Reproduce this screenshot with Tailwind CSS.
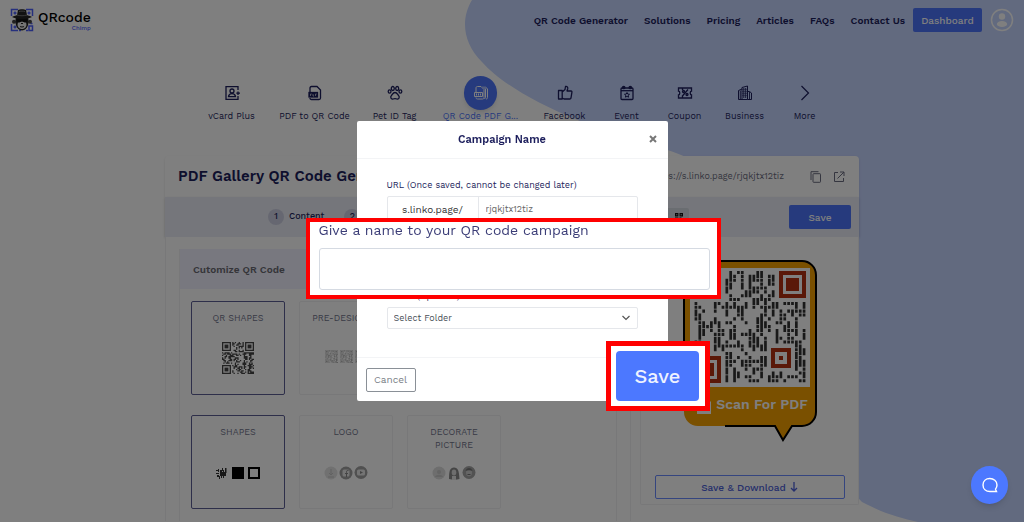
<!DOCTYPE html>
<html lang="en">
<head>
    <meta charset="UTF-8">
    <meta name="viewport" content="width=device-width, initial-scale=1.0">
    <title>PDF Gallery QR Code Generator</title>
    <script src="https://cdn.jsdelivr.net/npm/@tailwindcss/browser@4"></script>
</head>
<body class="h-screen overflow-hidden bg-white font-['Work_Sans',Inter,sans-serif] text-[#1c1e5c]">
    <div class="relative min-h-full">
        <!-- Background shape -->
        <svg class="absolute top-0 right-0 w-[560px] h-[522px]" viewBox="464 0 560 522" fill="#c5d4ff">
            <path d="M472 0C461 18 462 42 482 62C498 80 530 101 580 121C620 137 650 142 686 157C760 195 800 270 820 370C830 440 840 480 862 502C885 514 900 518 918 522H1024V0Z"/>
        </svg>

        <!-- Header -->
        <header class="relative flex items-center justify-between h-10 px-[10px]">
            <a href="#" class="flex items-center gap-1 text-black" aria-label="QRcode Chimp">
                <svg class="w-6 h-6" viewBox="0 0 24 24">
                    <g fill="none" stroke="#4c60fa" stroke-width="1.5">
                        <path d="M8 1.500H1.500V8M3.500 5h3M5 3.500v3M16 1.500h6.500V8M17.500 5h3M19 3.500v3M1.500 16v6.500H8M3.500 19h3M5 17.500v3M16 22.500h2M19 18h3.500v4.500H19zM22.500 15.500h-2M9 22.500h2"/>
                    </g>
                    <circle cx="4" cy="13.800" r="2" fill="#444"/>
                    <circle cx="20" cy="13.800" r="2" fill="#444"/>
                    <path d="M6 9h12c1.500 6 0 13-6 13.500C6 22 4.500 15 6 9z" fill="#222"/>
                    <path d="M8 14.500c2-1 6-1 8 0 1.500 4-1 6.500-4 6.500s-5.500-2.500-4-6.500z" fill="#e8e8e8"/>
                    <path d="M6.500 10.500h11v2c-1 2.500-4 2.500-5 .3h-1c-1 2.200-4 2.200-5-.3z" fill="#111"/>
                    <path d="M2 9c2-1.500 4-1 5-2l1-5c2-1 6-1 8 0l1 5c1 1 3 .5 5 2-4 2.500-16 2.500-20 0z" fill="#222"/>
                    <path d="M7 7c3 1 7 1 10 0M9 3.500c2-.5 4-.5 6 0" stroke="#888" stroke-width=".8" fill="none"/>
                    <path d="M10 18.500c1 .6 3 .6 4 0M11 15.500h2" stroke="#222" fill="none"/>
                </svg>
                <span class="flex flex-col items-end">
                    <span class="text-[14px] leading-[15px] font-medium">QRcode</span>
                    <span class="text-[6px] leading-[6px] font-medium text-[#4c60fa]">Chimp</span>
                </span>
            </a>
            <nav class="flex items-center gap-4 text-[10px] font-semibold">
                <a href="#">QR Code Generator</a>
                <a href="#">Solutions</a>
                <a href="#">Pricing</a>
                <a href="#">Articles</a>
                <a href="#">FAQs</a>
                <a href="#">Contact Us</a>
                <button class="-ml-2 w-[69px] h-6 rounded-xs bg-[#4c74fa] text-white font-medium">Dashboard</button>
                <a href="#" class="-ml-2" aria-label="Account">
                    <svg class="w-6 h-6" viewBox="0 0 24 24" fill="#fff">
                        <circle cx="12" cy="12" r="10.500" fill="none" stroke="#fff" stroke-width="1.500"/>
                        <circle cx="12" cy="8.500" r="3.200"/>
                        <ellipse cx="12" cy="16" rx="5.200" ry="3"/>
                    </svg>
                </a>
            </nav>
        </header>

        <!-- QR types -->
        <ul class="relative flex justify-center pt-9 pl-[3px] text-[9px] leading-3 text-center whitespace-nowrap">
            <li class="w-[72px]"><a href="#" class="flex flex-col items-center">
                <span class="flex items-center justify-center w-8 h-[34px]">
                    <svg class="w-4 h-4" viewBox="0 0 16 16" fill="none" stroke="currentColor" stroke-width="1.300"><path d="M14 5V1.700H2v12.600h12V11M14 6.500v3.500M12.300 8.200H16"/><circle cx="8" cy="6" r="2"/><path d="M4.500 11.700c.5-4 6.500-4 7 0z"/></svg>
                </span>vCard Plus</a></li>
            <li class="w-[94px]"><a href="#" class="flex flex-col items-center">
                <span class="flex items-center justify-center w-8 h-[34px]">
                    <svg class="w-4 h-4" viewBox="0 0 16 16" fill="none" stroke="currentColor" stroke-width="1.300"><path d="M3 7V3c0-1 .5-1.500 1.500-1.500H10l3.500 3.500v8c0 1-.5 1.500-1.500 1.500H4.500c-1 0-1.500-.5-1.500-1.500"/><rect x="2" y="7.500" width="8.500" height="4.500" fill="currentColor"/><path d="M3.500 11V9h1.200M6 9v2h1M8.500 11V9h1.200" stroke="#fff" stroke-width=".6"/></svg>
                </span>PDF to QR Code</a></li>
            <li class="w-[66px]"><a href="#" class="flex flex-col items-center">
                <span class="flex items-center justify-center w-8 h-[34px]">
                    <svg class="w-4 h-4" viewBox="0 0 16 16" fill="none" stroke="currentColor" stroke-width="1.300"><ellipse cx="5.800" cy="3.500" rx="1.500" ry="2"/><ellipse cx="10.200" cy="3.500" rx="1.500" ry="2"/><ellipse cx="2.600" cy="6.500" rx="1.400" ry="1.700"/><ellipse cx="13.400" cy="6.500" rx="1.400" ry="1.700"/><path d="M8 7.500c-2 0-2.500 2-3.500 3-1.500 1.500-.5 4 1.500 3.500 1.300-.4 2.700-.4 4 0 2 .5 3-2 1.500-3.500-1-1-1.500-3-3.500-3z"/></svg>
                </span>Pet ID Tag</a></li>
            <li class="w-[106px] text-[#4c74fa]"><a href="#" class="flex flex-col items-center">
                <span class="flex items-center justify-center w-[33px] h-[34px] rounded-full bg-[#4c74fa] text-white shadow-md">
                    <svg class="w-4 h-4" viewBox="0 0 16 16" fill="none" stroke="currentColor"><path d="M3 7V3c0-1 .5-1.500 1.500-1.500H8l3 3v8c0 1-.5 1.500-1.500 1.500h-5c-1 0-1.500-.5-1.500-1.500"/><path d="M10 1.500l2.500 2.500v8.500l-1 1.500M12 1.500L14.500 4v8.500c0 1-.5 1.500-1.500 1.500"/><path d="M1.500 7.500h8v4h-8zM3.500 10.500v-2M5.500 8.500v2M7.500 10.500v-2"/></svg>
                </span>QR Code PDF G...</a></li>
            <li class="w-[62px]"><a href="#" class="flex flex-col items-center">
                <span class="flex items-center justify-center w-8 h-[34px]">
                    <svg class="w-4 h-4" viewBox="0 0 16 16" fill="none" stroke="currentColor" stroke-width="1.300" stroke-linejoin="round"><path d="M1.500 5.500h3.700v8.500H1.500zM5.200 7L8 4.500 8.500 1.500c2-.3 2.500 1 2.200 2.200L10 6h4c.8 0 1 .7.900 1.300L14 13c-.2.700-.5 1-1.200 1H7l-1.800-1"/></svg>
                </span>Facebook</a></li>
            <li class="w-[62px]"><a href="#" class="flex flex-col items-center">
                <span class="flex items-center justify-center w-8 h-[34px]">
                    <svg class="w-4 h-4" viewBox="0 0 16 16" fill="none" stroke="currentColor" stroke-width="1.300"><rect x="2" y="3" width="12" height="11.500" rx="1"/><path d="M2 5.700h12"/><circle cx="4.700" cy="2.500" r="1.200" fill="currentColor"/><circle cx="11.300" cy="2.500" r="1.200" fill="currentColor"/><path d="M8 7.500l.8 1.600 1.700.2-1.300 1.200.4 1.700L8 11.400l-1.600.8.400-1.700-1.300-1.200 1.700-.2z" stroke-width="1"/></svg>
                </span>Event</a></li>
            <li class="w-[54px]"><a href="#" class="flex flex-col items-center">
                <span class="flex items-center justify-center w-8 h-[34px]">
                    <svg class="w-4 h-4" viewBox="0 0 16 16" fill="none" stroke="currentColor" stroke-width="1.300"><path d="M1.500 3h13v3c-1.700 0-1.700 4 0 4v3h-13v-3c1.700 0 1.700-4 0-4z"/><path d="M5 11.500l6-7M5.500 3v2M5.500 11v2"/><circle cx="6.500" cy="6.500" r="1"/><circle cx="10" cy="9.500" r="1"/></svg>
                </span>Coupon</a></li>
            <li class="w-[66px]"><a href="#" class="flex flex-col items-center">
                <span class="flex items-center justify-center w-8 h-[34px]">
                    <svg class="w-4 h-4" viewBox="0 0 16 16" fill="none" stroke="currentColor"><path d="M5 14.500H1.500V5.500L5 4M5 14.500v-12L10.500 1v13.500zM10.500 6.500h2l2 1.500v6.500h-4"/><path d="M6.800 3v10M8.700 3v10M3.300 5.500V14M12.500 7v7" stroke-width=".9"/><path d="M5 4.500h5.500M5 6.500h5.500M5 8.500h5.500M5 10.500h5.500" stroke-width=".4"/></svg>
                </span>Business</a></li>
            <li class="w-[54px]"><a href="#" class="flex flex-col items-center">
                <span class="flex items-center justify-center w-8 h-[34px]">
                    <svg class="w-4 h-4" viewBox="0 0 16 16" fill="none" stroke="currentColor" stroke-width="1.200"><path d="M4.500 1l7 7-7 7"/></svg>
                </span>More</a></li>
        </ul>

        <!-- Generator -->
        <main class="relative w-full max-w-[694px] mx-auto mt-[34px]">
            <div class="bg-white rounded-t-sm shadow-sm">
                <div class="flex items-center justify-between h-[41px] pl-[13px] pr-[14px]">
                    <h1 class="text-[15px] font-semibold">PDF Gallery QR Code Generator</h1>
                    <div class="flex items-center text-[9px] text-[#6b6d80]">
                        <span class="mr-[26px]">https://s.linko.page/rjqkjtx12tiz</span>
                        <button class="mr-[11px]" aria-label="Copy">
                            <svg class="w-3 h-3" viewBox="0 0 12 12" fill="none" stroke="#6b6d80"><path d="M1 9V.7h7.500"/><rect x="3" y="2.700" width="7.500" height="8.600" rx=".6"/></svg>
                        </button>
                        <button aria-label="Open">
                            <svg class="w-3 h-3" viewBox="0 0 12 12" fill="none" stroke="#6b6d80"><path d="M5 1.500H1.500v9h9V7M7 1h4v4M11 1L4.500 7.500"/></svg>
                        </button>
                    </div>
                </div>
                <div class="flex items-center justify-between h-10 pl-[103px] pr-2 bg-[#eaedf6] shadow-sm text-[9px] font-medium">
                    <div class="flex items-center">
                        <span class="flex items-center justify-center w-4 h-4 mr-[5px] rounded-full bg-[#cdcfe2]">1</span>Content
                        <span class="flex items-center justify-center w-4 h-4 ml-5 mr-[5px] rounded-full bg-[#cdcfe2]">2</span>Design
                    </div>
                    <div class="flex items-center gap-[100px]">
                        <button class="flex items-center justify-end w-[30px] h-[18px] pr-1.5 rounded-xs bg-[#d5dae2]" aria-label="QR style">
                            <svg class="w-2 h-2" viewBox="0 0 8 8" fill="#111"><path d="M0 0h3.400v3.400H0zM4.500 0H8v3.400H4.500zM0 4.500h3.400V8H0zM4.500 4.500h2V6H8v1H6v1H4.500z"/><path d="M1.300 1.300h1v1h-1zM5.700 1.300h1v1h-1zM1.300 5.700h1v1h-1z" fill="#d5dae2"/></svg>
                        </button>
                        <button class="w-[62px] h-6 rounded-xs bg-[#4c74fa] text-white text-[10px]">Save</button>
                    </div>
                </div>
            </div>

            <div class="flex items-start gap-[9px]">
                <!-- Customize panel -->
                <section class="flex-1 px-[13px] pt-3 bg-white border-x border-[#f0f0f2]">
                    <div class="pb-3 border-x border-[#f0f0f2]">
                        <h2 class="flex items-center h-10 pl-[13px] mb-3 bg-[#f0f0ff] text-[10px] font-semibold text-[#6a6a72]">Cutomize QR Code</h2>
                        <div class="grid grid-cols-[repeat(3,94px)] gap-x-3.5 gap-y-5 pl-[11px] text-[9px] leading-[13px] text-center text-[#71748c]">
                            <button class="flex flex-col items-center h-[94px] pt-2.5 rounded-xs border border-[#5c5e94]">QR SHAPES
                                <svg class="w-8 h-8 mt-[17px]" viewBox="0 0 25 25" data-qr="square" fill="#444"></svg>
                            </button>
                            <button class="flex flex-col items-center h-[94px] pt-2.5 rounded-xs border border-[#f0f0f2]">PRE-DESIGNED
                                <span class="flex gap-0.5 mt-[25px] opacity-40">
                                    <svg class="w-[13px] h-[13px]" viewBox="0 0 25 25" data-qr="square" fill="#444"></svg>
                                    <svg class="w-[13px] h-[13px]" viewBox="0 0 25 25" data-qr="square" fill="#444"></svg>
                                    <svg class="w-[13px] h-[13px]" viewBox="0 0 25 25" data-qr="square" fill="#444"></svg>
                                </span>
                            </button>
                            <span></span>
                            <button class="flex flex-col items-center h-[94px] pt-2.5 rounded-xs border border-[#5c5e94]">SHAPES
                                <svg class="w-11 h-3 mt-7" viewBox="0 0 44 12" fill="#000"><path d="M0 3h2v1H0zM2 2h1v3H2zM4 3h2v6H4zM6 1h1v3H6zM7 3h1v8H7zM9 1h1.500v5H9zM5 5h5v4H5zM0 6h3v1H0zM1 8h2v2H1zM3 9h1v3H3zM5 9h1v2H5zM8 8h2v1H8z" fill="#333"/><path d="M16 0h12v12H16z"/><path d="M33 1h10v10H33z" fill="none" stroke="#000" stroke-width="2"/></svg>
                            </button>
                            <button class="flex flex-col items-center h-[94px] pt-2.5 rounded-xs border border-[#f0f0f2]">LOGO
                                <svg class="w-11 h-[14px] mt-[27px]" viewBox="0 0 44 14"><circle cx="7" cy="7" r="6.500" fill="#e2e2e2"/><path d="M7 3v6M5 7l2 2 2-2M4 11h6" stroke="#c4c4c4" fill="none"/><circle cx="22" cy="7" r="6.500" fill="#a0a0a0"/><rect x="18.500" y="3.500" width="7" height="7" rx="1.500" fill="#e8e8e8"/><path d="M24.500 4.500c-2-.2-2 .5-2 2V11M21 7.500h3" stroke="#888" fill="none"/><circle cx="37" cy="6.500" r="6.500" fill="#a0a0a0"/><rect x="33" y="3.500" width="8" height="6" rx="1.500" fill="#e8e8e8"/><path d="M36 5l3 1.500L36 8z" fill="#888"/></svg>
                            </button>
                            <button class="flex flex-col items-center h-[94px] pt-2.5 rounded-xs border border-[#f0f0f2]">DECORATE<br>PICTURE
                                <svg class="w-11 h-[14px] mt-3.5" viewBox="0 0 44 14"><circle cx="7" cy="7" r="6.500" fill="#dcdcdc"/><circle cx="7" cy="6" r="2" fill="#c8c8c8"/><path d="M3 11c1-3 7-3 8 0" fill="#c8c8c8"/><path d="M17 13c0-8 1-11.500 5-11.500S27 5 27.500 13c-3 1-7 1-10.500 0z" fill="#8a8a8a"/><ellipse cx="22" cy="6.500" rx="2.300" ry="3" fill="#ddd"/><path d="M20 10h4v4h-4z" fill="#e4e4e4"/><circle cx="37" cy="6.500" r="6.500" fill="#a4a4a4"/><ellipse cx="37" cy="6.500" rx="3" ry="3.800" fill="#ccc"/><path d="M33.500 5c1-4 6-4 7 0-2-1-5-1-7 0z" fill="#777"/><path d="M35.500 8.500h3" stroke="#777"/></svg>
                            </button>
                        </div>
                    </div>
                </section>

                <!-- Preview -->
                <aside class="flex flex-col items-center w-[219px] pt-[23px] pb-[5px] bg-white border border-t-0 border-[#f0f0f2] rounded-b-xs">
                    <svg class="w-[136px] h-[184px]" viewBox="0 0 136 184" role="img" aria-label="Scan For PDF">
                        <path d="M16 1h104a14 14 0 0 1 14 14v137a14 14 0 0 1-14 14h-10l-9 14-8-14H16a14 14 0 0 1-14-14V15A14 14 0 0 1 16 1z" fill="#f5a000"/>
                        <path d="M2 130V15A14 14 0 0 1 16 1h104a14 14 0 0 1 14 14v137a14 14 0 0 1-14 14h-10l-9 14-8-14H43" fill="none" stroke="#000" stroke-width="2"/>
                        <path d="M8 8h120v119H8z" fill="#fff"/>
                        <svg x="12" y="11" width="112" height="112" viewBox="0 0 29 29" data-qr="bars" fill="#333"></svg>
                        <g fill="none" stroke="#b43010" stroke-width="4">
                            <path d="M99 13h23v23H99zM14 98h23v23H14zM14 13h23v23H14z"/>
                            <path d="M91 90h16v16H91z"/>
                        </g>
                        <path d="M104 18h13v13h-13zM19 103h13v13H19zM97 96h4v4h-4z" fill="#b43010"/>
                        <path d="M15 138h10l4 4v12H15z" fill="#fff"/>
                        <text x="80" y="149" text-anchor="middle" font-size="14" font-weight="600" fill="#fff">Scan For PDF</text>
                    </svg>
                    <button class="flex items-center justify-center gap-1 w-[190px] h-6 mt-[31px] rounded-xs border border-[#6a8aff] text-[10px] font-medium text-[#4c60d8]">Save &amp; Download
                        <svg class="w-2 h-2.5" viewBox="0 0 8 10" fill="none" stroke="currentColor" stroke-width="1.300"><path d="M4 0v9M1 6l3 3 3-3"/></svg>
                    </button>
                </aside>
            </div>
        </main>
    </div>

    <!-- Campaign modal -->
    <div class="fixed inset-0 flex items-start justify-center pt-[121px] bg-black/50">
        <form class="relative w-[311px] bg-white rounded-xs" role="dialog" aria-labelledby="modalTitle">
            <div class="relative flex items-center justify-center h-[38px] pr-5 pt-0.5 border-b border-gray-100">
                <h2 id="modalTitle" class="text-[11px] font-semibold">Campaign Name</h2>
                <button type="button" class="absolute right-2.5 top-2.5" aria-label="Close">
                    <svg class="w-2.5 h-4" viewBox="0 0 10 16" stroke="#777" stroke-width="2"><path d="M2 5l6 6M8 5l-6 6"/></svg>
                </button>
            </div>
            <div class="h-[198px] px-[30px] pt-[19px] text-[9px]">
                <label for="slug" class="block mb-1 leading-[14px]">URL (Once saved, cannot be changed later)</label>
                <div class="flex h-[27px] border border-gray-200 rounded-xs">
                    <span class="flex items-center justify-center w-[91px] border-r border-gray-200 text-[10px] text-[#333]">s.linko.page/</span>
                    <input id="slug" type="text" value="rjqkjtx12tiz" class="flex-1 min-w-0 px-[7px] text-[#666]">
                </div>
                <label for="folder" class="block mt-[66px] mb-1 leading-[14px]">Folder (Optional)</label>
                <div class="relative">
                    <select id="folder" class="block w-full h-[22px] pt-0.5 px-1.5 appearance-none border border-gray-200 rounded-xs bg-white text-[#495057]">
                        <option>Select Folder</option>
                    </select>
                    <svg class="absolute right-2 top-[7px] w-2 h-2 pointer-events-none" viewBox="0 0 8 8" fill="none" stroke="#555" stroke-width="1.200"><path d="M.5 2L4 5.500 7.500 2"/></svg>
                </div>
            </div>
            <div class="flex items-center h-11 px-[9px] border-t border-gray-100">
                <button type="button" class="w-[50px] h-6 rounded-xs border border-[#8a9097] text-[10px] text-[#7a8087]">Cancel</button>
            </div>

            <!-- Highlighted controls -->
            <div class="absolute -left-[51px] top-[97px] w-[415px] h-[81px] px-[9px] bg-white border-4 border-[#ff0000]">
                <label for="campaign" class="block text-[14px] leading-4 text-[#3b3d77]">Give a name to your QR code campaign</label>
                <input id="campaign" type="text" class="block w-[391px] h-[42px] mt-2.5 px-2 rounded-[3px] border border-[#d5dae2]">
            </div>
            <div class="absolute left-[249px] top-[220px] flex items-center justify-center w-[104px] h-[70px] bg-white border-5 border-[#ff0000]">
                <button type="submit" class="w-[83px] h-[50px] rounded-[4px] bg-[#4c78ff] text-[20px] font-medium text-[#eef2ff]">Save</button>
            </div>
        </form>
    </div>

    <button class="fixed right-4 bottom-[18px] flex items-center justify-center w-[37px] h-[38px] rounded-full bg-[#4c78ff] shadow-md" aria-label="Chat">
        <svg class="w-4 h-4" viewBox="0 0 16 16" fill="none" stroke="#fff" stroke-width="1.400"><path d="M14.500 14.500H8C4 14.500 1 12 1 8s3-6.500 6.800-6.500S15 4 15 8c0 1.800-.5 3-1.500 4.200z"/></svg>
    </button>

    <script>
        // Fill each QR placeholder with modules
        document.querySelectorAll('[data-qr]').forEach(svg => {
            const bars = svg.dataset.qr === 'bars';
            const n = bars ? 29 : 25;
            let seed = bars ? 77 : 19;
            const rand = () => (seed = (seed * 16807) % 2147483647) / 2147483647;
            const inFinder = (x, y) => (x < 8 && y < 8) || (x > n - 9 && y < 8) || (x < 8 && y > n - 9);
            const inAlign = (x, y) => bars && x > 18 && x < 26 && y > 18 && y < 26;
            let d = '';
            for (let x = 0; x < n; x++) {
                for (let y = 0; y < n; y++) {
                    if (inFinder(x, y) || inAlign(x, y) || rand() > 0.45) continue;
                    d += bars ? `M${x + 0.15} ${y}h.7v.8h-.7z` : `M${x} ${y}h1v1h-1z`;
                    if (bars && rand() > 0.6 && !inFinder(x, y + 1) && !inAlign(x, y + 1) && y < n - 1) d += `M${x + 0.15} ${y}h.7v1.8h-.7z`;
                }
            }
            let html = `<path d="${d}"/>`;
            if (!bars) {
                [[0, 0], [18, 0], [0, 18]].forEach(([x, y]) => {
                    html += `<path d="M${x + 0.5} ${y + 0.5}h6v6h-6z" fill="none" stroke="#444"/><path d="M${x + 2} ${y + 2}h3v3h-3z"/>`;
                });
            }
            svg.innerHTML = html;
        });
    </script>
</body>
</html>
